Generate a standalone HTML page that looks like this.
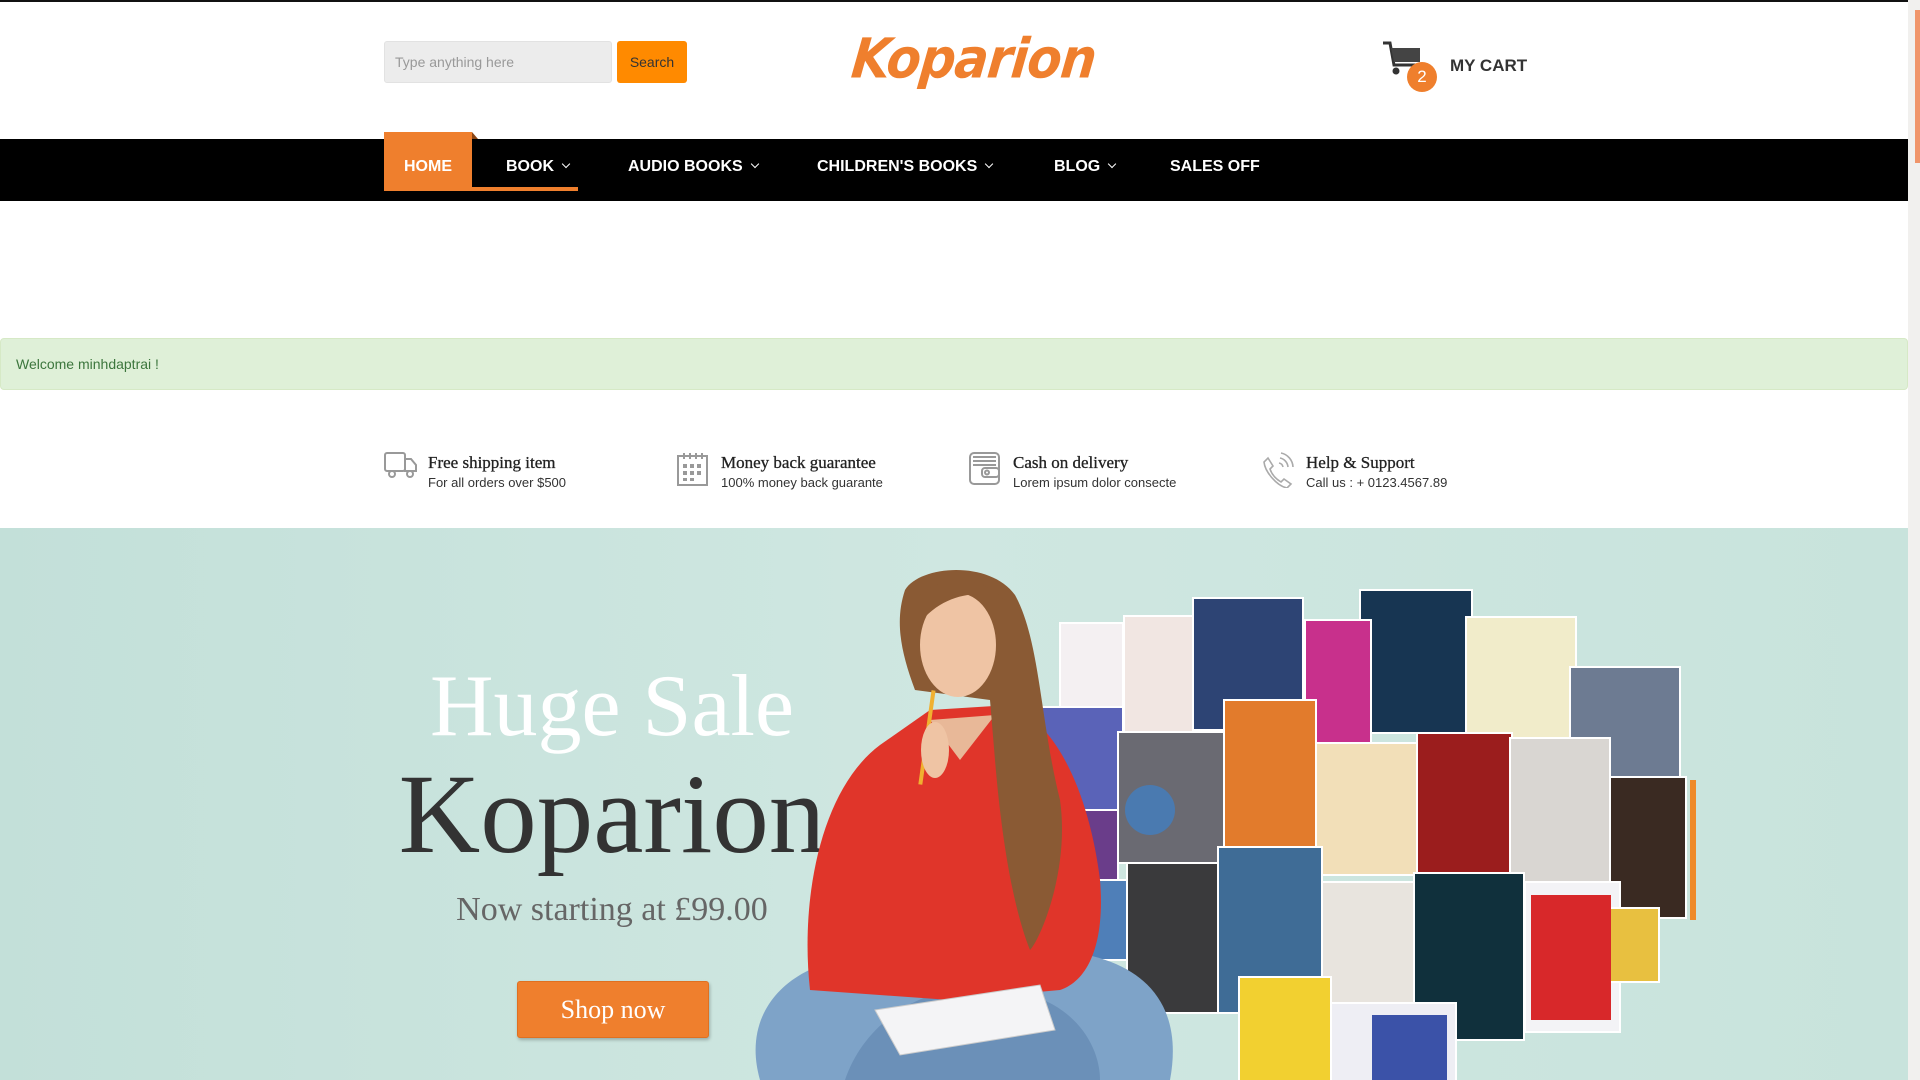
<!DOCTYPE html>
<html><head><meta charset="utf-8"><style>
*{margin:0;padding:0;box-sizing:border-box}
body{width:1920px;height:1080px;overflow:hidden;background:#fff;font-family:"Liberation Sans",sans-serif;position:relative}
.abs{position:absolute}
.nav a{position:absolute;top:158px;color:#fff;font-weight:bold;font-size:16px;text-decoration:none;white-space:nowrap}
.nav a .c{display:inline-block;width:6px;height:6px;border-right:1.5px solid #fff;border-bottom:1.5px solid #fff;transform:rotate(45deg);margin-left:9px;position:relative;top:-4px}
.ft{position:absolute;top:452px}
.ft .t{position:absolute;left:44px;top:1px;font-family:"Liberation Serif",serif;font-size:17px;color:#222;white-space:nowrap;-webkit-text-stroke:0.3px #222}
.ft .s{position:absolute;left:44px;top:23px;font-size:13px;color:#333;white-space:nowrap}
</style></head><body>
<div class="abs" style="left:0;top:0;width:1908px;height:2px;background:#111"></div>
<div class="abs" style="left:1908px;top:0;width:12px;height:1080px;background:#f1f0ee"></div>
<div class="abs" style="left:1915px;top:10px;width:5px;height:153px;background:#f0956a"></div>

<div class="abs" style="left:384px;top:41px;width:228px;height:42px;background:#ececec;border:1px solid #e2e2e2;border-radius:3px"></div>
<div class="abs" style="left:395px;top:54px;font-size:14px;color:#999">Type anything here</div>
<div class="abs" style="left:617px;top:41px;width:70px;height:42px;background:#ff8a00;border-radius:3px;color:#333;font-size:14px;text-align:center;line-height:42px">Search</div>

<div class="abs" style="left:852px;top:30px;width:210px;text-align:center;font-family:'DejaVu Sans',sans-serif;font-style:italic;font-weight:bold;font-size:50px;color:#ef7f2d;letter-spacing:-1px;transform:skewX(-6deg) scaleY(1.1)">Koparion</div>

<svg class="abs" style="left:1382px;top:40px" width="42" height="36" viewBox="0 0 42 36">
<path d="M1 3h7l4 22h22" fill="none" stroke="#333" stroke-width="3"/>
<path d="M9 8h29v14H12z" fill="#444"/>
<circle cx="14" cy="31" r="3.5" fill="#333"/><circle cx="31" cy="31" r="3.5" fill="#333"/>
</svg>
<div class="abs" style="left:1407px;top:62px;width:30px;height:30px;border-radius:50%;background:#ef7f2d;color:#fff;font-size:17px;text-align:center;line-height:30px">2</div>
<div class="abs" style="left:1450px;top:56px;font-size:17px;font-weight:bold;color:#333">MY CART</div>

<div class="abs" style="left:0;top:139px;width:1908px;height:62px;background:#000"></div>
<div class="abs" style="left:472px;top:132px;width:0;height:0;border-left:6px solid #8a4515;border-top:7px solid transparent"></div>
<div class="abs" style="left:384px;top:132px;width:88px;height:58px;background:#ef7f2d"></div>
<div class="abs" style="left:384px;top:187px;width:194px;height:4px;background:#ef7f2d"></div>
<div class="nav">
<a style="left:404px">HOME</a>
<a style="left:506px">BOOK<span class="c"></span></a>
<a style="left:628px">AUDIO BOOKS<span class="c"></span></a>
<a style="left:817px">CHILDREN'S BOOKS<span class="c"></span></a>
<a style="left:1054px">BLOG<span class="c"></span></a>
<a style="left:1170px">SALES OFF</a>
</div>

<div class="abs" style="left:0;top:338px;width:1908px;height:52px;background:#dff0d8;border:1px solid #d6e9c6;border-radius:4px"></div>
<div class="abs" style="left:16px;top:356px;font-size:14px;color:#3c763d">Welcome minhdaptrai !</div>

<div class="ft" style="left:384px">
<svg width="34" height="28" viewBox="0 0 34 28" fill="none" stroke="#999" stroke-width="2"><rect x="1" y="1" width="20" height="18" rx="2"/><path d="M21 7h6l5 6v6H21z"/><circle cx="8" cy="22" r="3" fill="#fff"/><circle cx="26" cy="22" r="3" fill="#fff"/></svg>
<div class="t">Free shipping item</div><div class="s">For all orders over $500</div></div>
<div class="ft" style="left:677px">
<svg width="32" height="34" viewBox="0 0 32 34" fill="none" stroke="#999" stroke-width="2"><rect x="1" y="4" width="29" height="29"/><path d="M7 1v6M13 1v6M19 1v6M25 1v6"/><g fill="#999" stroke="none"><rect x="6" y="12" width="4" height="4"/><rect x="13" y="12" width="4" height="4"/><rect x="20" y="12" width="4" height="4"/><rect x="6" y="19" width="4" height="4"/><rect x="13" y="19" width="4" height="4"/><rect x="20" y="19" width="4" height="4"/><rect x="6" y="26" width="4" height="3"/><rect x="13" y="26" width="4" height="3"/></g></svg>
<div class="t">Money back guarantee</div><div class="s">100% money back guarante</div></div>
<div class="ft" style="left:969px">
<svg width="32" height="34" viewBox="0 0 32 34" fill="none" stroke="#999" stroke-width="2"><rect x="1" y="1" width="29" height="31" rx="4"/><path d="M4 5h23M4 9h23M4 13h23"/><rect x="13" y="16" width="17" height="9" rx="3"/><circle cx="18" cy="20.5" r="2"/></svg>
<div class="t">Cash on delivery</div><div class="s">Lorem ipsum dolor consecte</div></div>
<div class="ft" style="left:1262px">
<svg width="32" height="36" viewBox="0 0 32 36" fill="none" stroke="#aaa" stroke-width="1.6"><path d="M6 6l5 8-3 3c2 6 6 10 11 13l3-3 7 5-4 4C15 34 3 20 2 10z"/><path d="M18 6a10 10 0 0 1 8 9M19 1a15 15 0 0 1 12 14M17 11a5 5 0 0 1 4 4"/></svg>
<div class="t">Help &amp; Support</div><div class="s">Call us : + 0123.4567.89</div></div>

<div class="abs" style="left:0;top:528px;width:1908px;height:552px;background:linear-gradient(90deg,#c3e0d9 0%,#cfe7e1 50%,#c8e3dc 100%);overflow:hidden">
<div class="abs" style="left:0;top:128px;width:1224px;text-align:center;font-family:'Liberation Serif',serif;font-size:88px;color:#fff">Huge Sale</div>
<div class="abs" style="left:0;top:222px;width:1224px;text-align:center;font-family:'Liberation Serif',serif;font-size:113px;color:#333">Koparion</div>
<div class="abs" style="left:0;top:363px;width:1224px;text-align:center;font-family:'Liberation Serif',serif;font-size:34px;color:#666">Now starting at £99.00</div>
<div class="abs" style="left:517px;top:453px;width:192px;height:57px;background:#ef7f2d;border:1px solid #e07020;border-radius:3px;box-shadow:1px 2px 3px rgba(0,0,0,.25);color:#fff;font-family:'Liberation Serif',serif;font-size:26px;text-align:center;line-height:55px">Shop now</div>

<svg class="abs" style="left:0;top:0" width="1908" height="552" viewBox="0 528 1908 552">
<g stroke="#fff" stroke-width="2">
<rect x="1060" y="623" width="63" height="84" fill="#f4f0f2"/>
<rect x="1124" y="616" width="81" height="126" fill="#f1e6e2"/>
<rect x="1193" y="598" width="110" height="132" fill="#2d4474"/>
<rect x="1360" y="590" width="112" height="143" fill="#173552"/>
<rect x="1305" y="620" width="66" height="123" fill="#c8308c"/>
<rect x="1466" y="617" width="110" height="123" fill="#f1ecca"/>
<rect x="1570" y="667" width="110" height="113" fill="#6d7b92"/>
<rect x="1040" y="707" width="83" height="103" fill="#5a63b8"/>
<rect x="1040" y="810" width="78" height="70" fill="#6a3d8a"/>
<rect x="1040" y="880" width="87" height="80" fill="#4f7fb8"/>
<rect x="1118" y="732" width="106" height="131" fill="#6a6a72"/>
<rect x="1224" y="700" width="92" height="147" fill="#e27b2c"/>
<rect x="1316" y="743" width="104" height="132" fill="#f2dfb8"/>
<rect x="1417" y="733" width="95" height="140" fill="#9b1d1d"/>
<rect x="1510" y="738" width="100" height="144" fill="#d9d6d2"/>
<rect x="1610" y="777" width="76" height="141" fill="#3a2a22"/>
<rect x="1127" y="863" width="91" height="150" fill="#3a3a3c"/>
<rect x="1218" y="847" width="104" height="166" fill="#3f6c96"/>
<rect x="1322" y="882" width="92" height="121" fill="#e8e4de"/>
<rect x="1414" y="873" width="110" height="167" fill="#10303c"/>
<rect x="1525" y="882" width="95" height="150" fill="#f3f3f6"/>
<rect x="1599" y="908" width="60" height="74" fill="#e8c040"/>
<rect x="1239" y="977" width="92" height="110" fill="#f2d030"/>
<rect x="1331" y="1003" width="125" height="80" fill="#eeeef4"/>
</g>
<rect x="1531" y="895" width="80" height="125" fill="#d8282a"/>
<rect x="1372" y="1015" width="75" height="65" fill="#3b52a8"/>
<rect x="1690" y="780" width="6" height="140" fill="#ef8a2a"/>
<circle cx="1150" cy="810" r="25" fill="#4a7ab0"/>
<path d="M760 1080 C740 1010 790 960 870 955 L1050 950 C1140 955 1185 1000 1170 1080Z" fill="#7ea3c8"/>
<path d="M845 1080 C860 1035 900 1000 950 990 L1030 995 C1080 1010 1100 1050 1100 1080Z" fill="#6b90b8"/>
<path d="M810 990 C800 900 820 790 880 745 L930 710 L1010 705 C1060 725 1090 800 1100 880 C1105 940 1090 980 1060 990 L950 1000Z" fill="#e0352a"/>
<path d="M930 720 L960 760 L995 715Z" fill="#e8b898"/>
<path d="M905 590 C920 565 990 560 1015 595 C1040 640 1040 720 1060 800 C1070 870 1040 940 1030 950 C1010 900 1000 820 995 760 L990 700 L915 690 C900 650 895 620 905 590Z" fill="#8a5a34"/>
<ellipse cx="958" cy="645" rx="38" ry="52" fill="#efc4a4"/>
<path d="M908 612 C925 575 975 570 1005 600 C985 590 945 590 918 625Z" fill="#8a5a34"/>
<rect x="925" y="690" width="4" height="95" fill="#f0b030" transform="rotate(8 927 737)"/>
<ellipse cx="935" cy="750" rx="14" ry="28" fill="#efc4a4"/>
<path d="M875 1010 L1040 985 L1055 1030 L900 1055Z" fill="#f4f4f6" stroke="#ccc"/>
</svg>
</div>
</body></html>
